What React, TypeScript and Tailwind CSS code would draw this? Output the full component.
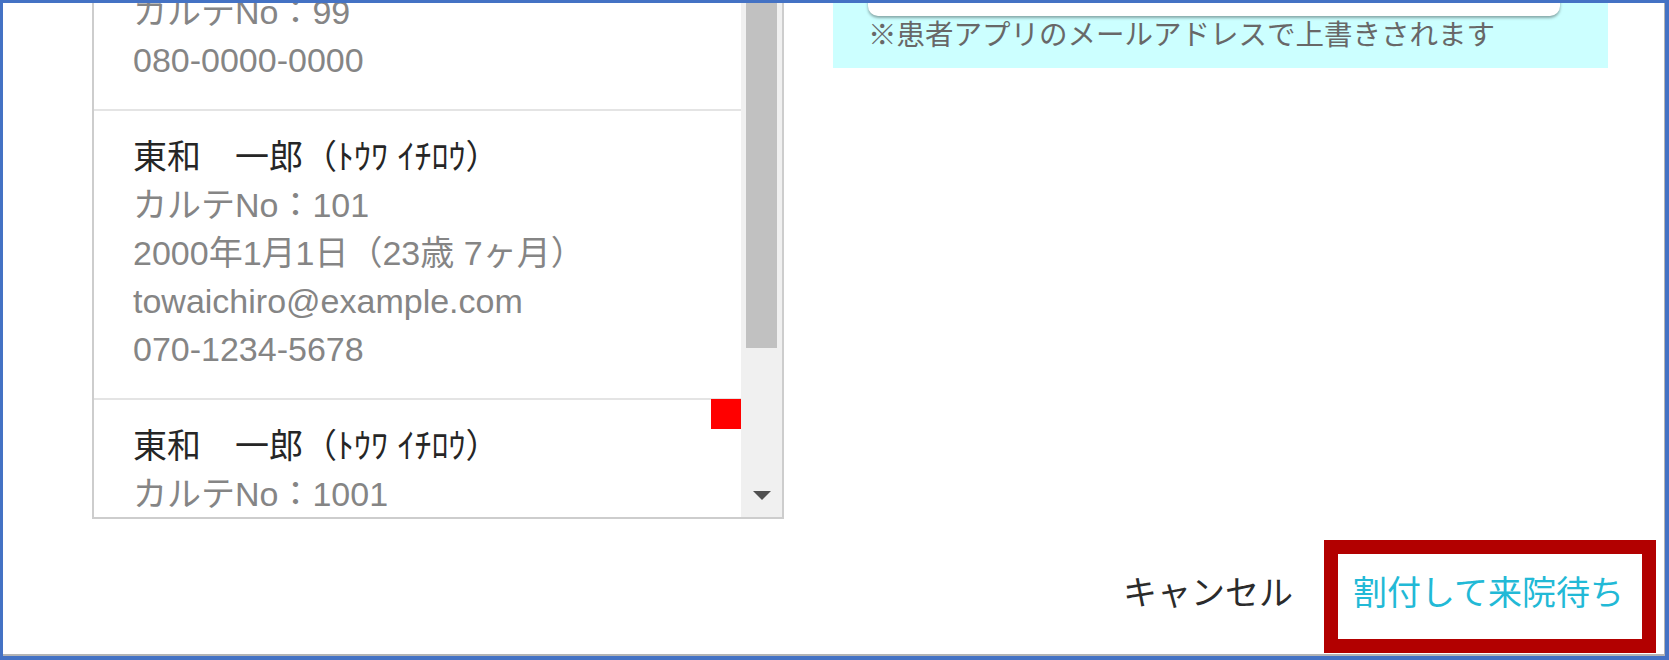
type Patient = {
  name: string;
  lines: string[];
  flagged?: boolean;
};

// the list is scrolled: first entry sits partly above the top edge
const patients: Patient[] = [
  { name: '東和　花子（ﾄｳﾜ ﾊﾅｺ）', lines: ['カルテNo：99', '080-0000-0000'] },
  {
    name: '東和　一郎（ﾄｳﾜ ｲﾁﾛｳ）',
    lines: ['カルテNo：101', '2000年1月1日（23歳 7ヶ月）', 'towaichiro@example.com', '070-1234-5678'],
  },
  { name: '東和　一郎（ﾄｳﾜ ｲﾁﾛｳ）', lines: ['カルテNo：1001'], flagged: true },
];

function PatientRow({ p }: { p: Patient }) {
  return (
    <div className="relative border-b-2 border-[#e4e4e4] pl-[39px] pt-[22px] pb-[25px]">
      {p.flagged && <span className="absolute -top-[1px] right-0 w-[30px] h-[30px] bg-[#ff0000]" />}
      <div className="text-[#262626]">{p.name}</div>
      {p.lines.map((l) => (
        <div key={l} className="text-[#858585]">
          {l}
        </div>
      ))}
    </div>
  );
}

function PatientList() {
  return (
    <div className="ml-[89px] w-[692px] h-[516px] flex border-x-2 border-b-2 border-[#cdcdcd] shrink-0">
      <div className="flex-1 overflow-hidden">
        <div className="-mt-[85px] text-[34px] leading-[48px]">
          {patients.map((p, i) => (
            <PatientRow key={i} p={p} />
          ))}
        </div>
      </div>
      {/* scrollbar */}
      <div className="w-[41px] bg-[#f0f0f0] flex flex-col items-center">
        <div className="w-[31px] h-[345px] bg-[#c1c1c1]" />
        <div className="flex-1" />
        <svg width="18" height="10" viewBox="0 0 18 10" className="mb-[16px]">
          <path d="M0 0 H18 L9 9 Z" fill="#505050" />
        </svg>
      </div>
    </div>
  );
}

function MailNote() {
  return (
    <div className="ml-[49px] w-[775px] h-[65px] bg-[#ccffff] pl-[35px] pr-[48px] shrink-0">
      <div className="-mt-[27px] h-[40px] bg-white rounded-b-[10px] shadow-[0_2px_3px_rgba(0,0,0,0.35)]" />
      <p className="mt-[3px] text-[28.5px] leading-[32px] text-[#686868]">※患者アプリのメールアドレスで上書きされます</p>
    </div>
  );
}

export default function App() {
  return (
    <div
      className="relative w-[1669px] h-[660px] overflow-hidden bg-white border-[#4472c4] border-t-[3px] border-l-[3px] border-r-[4px] border-b-[4px] shadow-[inset_-1px_-2px_0_#b4b4b4]"
      style={{ fontFamily: '"Liberation Sans", "Noto Sans CJK JP", sans-serif' }}
    >
      <div className="flex items-start">
        <PatientList />
        <MailNote />
      </div>

      <div className="mt-[50px] flex justify-end items-center gap-[60px] pr-[41px] text-[34px] leading-[48px]">
        <button className="text-[#2b2b2b]">キャンセル</button>
        <button className="text-[#22b9d6]">割付して来院待ち</button>
      </div>

      {/* annotation frame around the primary action */}
      <div className="absolute left-[1321px] top-[537px] w-[332px] h-[113px] border-[14px] border-[#b20000] pointer-events-none" />
    </div>
  );
}
